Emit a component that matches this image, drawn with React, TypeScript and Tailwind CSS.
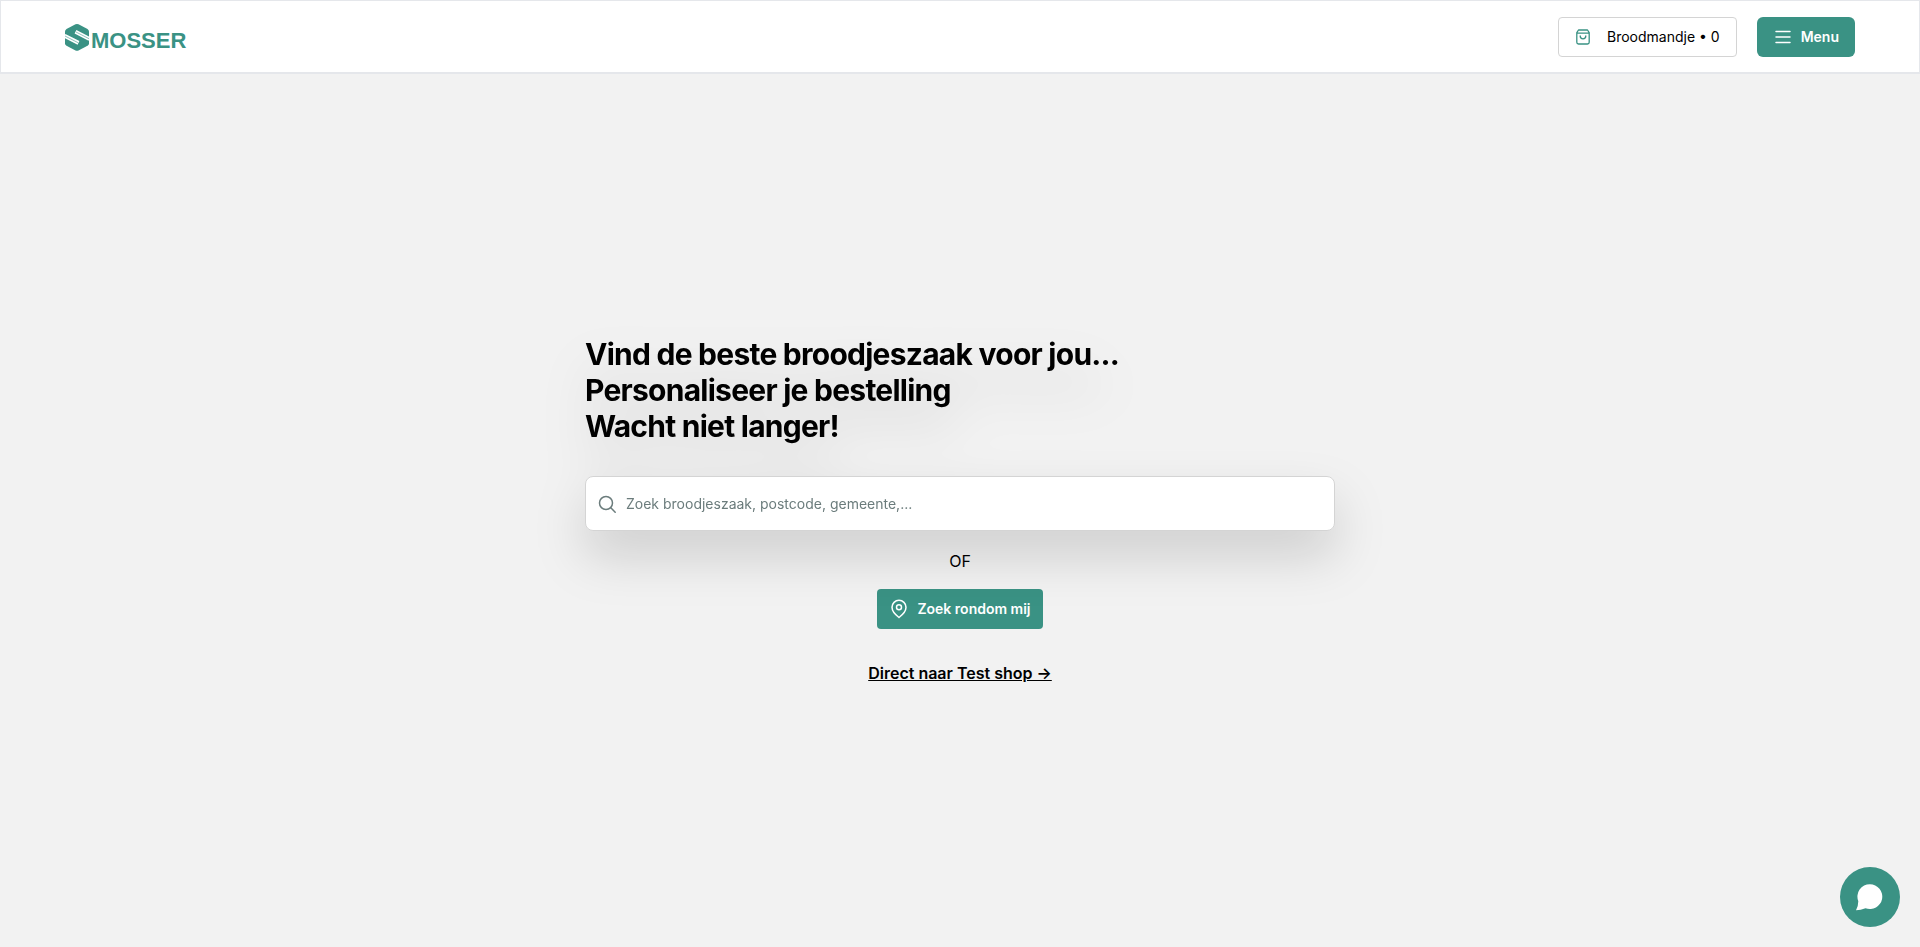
function Logo() {
  return (
    <svg viewBox="0 0 124 30" className="h-[30px] w-[124px]" role="img" aria-label="Smosser">
      <path
        d="M10.500 1.300Q12 .600 13.500 1.300L22.500 6Q24 7 24 8.500V20.500Q24 22 22.500 22.800L13.500 27.500Q12 28.200 10.500 27.500L1.500 22.800Q0 22 0 20.500V8.500Q0 7 1.500 6Z"
        fill="#3a9284"
      />
      <path d="M10.500 8.800 24.500 16M-.5 12.700 13.500 19.900" stroke="#ffffff" strokeWidth="4" fill="none" />
      <path d="M11 9 24 15.700M0 13 13 19.700" stroke="#3a9284" strokeWidth=".8" strokeOpacity=".7" fill="none" />
      <text x="26" y="25" fontFamily="Liberation Sans, Arial, sans-serif" fontWeight="700" fontSize="22" fill="#3a9284">
        MOSSER
      </text>
    </svg>
  );
}

function BagIcon() {
  return (
    <svg viewBox="0 0 16 16" className="size-4" fill="none" stroke="#3a9284" strokeWidth="1.3" strokeLinecap="round" strokeLinejoin="round" aria-hidden="true">
      <path d="M3.500 1h9l1.700 2.600v9.700a1.700 1.700 0 0 1-1.700 1.700h-9a1.700 1.700 0 0 1-1.700-1.700V3.600ZM1.800 4.200h12.400M10.800 7a2.800 2.800 0 0 1-5.600 0" />
    </svg>
  );
}

export default function App() {
  return (
    <div className="flex min-h-screen flex-col bg-[#f2f2f2] font-['Inter',sans-serif] text-black">
      <header className="flex h-[74px] items-center justify-between border border-b-2 border-[#e5e7eb] bg-white px-16">
        <a href="#home" className="pt-[3px]">
          <Logo />
        </a>
        <div className="flex items-center gap-5">
          <button type="button" className="flex h-10 items-center gap-4 rounded border border-[#d4d4d4] bg-white px-4 text-sm">
            <BagIcon />
            <span>Broodmandje • 0</span>
          </button>
          <button type="button" className="flex h-10 items-center gap-2 rounded-md bg-[#3a9284] px-4 text-sm font-semibold text-white">
            <svg viewBox="0 0 20 20" className="size-5" stroke="currentColor" strokeWidth="1.500" strokeLinecap="round" aria-hidden="true">
              <path d="M3 4.500h14M3 10h14M3 15.500h14" />
            </svg>
            <span>Menu</span>
          </button>
        </div>
      </header>

      <main className="flex flex-1 flex-col items-center justify-center">
        <div className="flex w-full max-w-[750px] flex-col items-center">
          <div className="w-full drop-shadow-2xl">
            <h1 className="text-3xl font-bold tracking-tight">
              Vind de beste broodjeszaak voor jou...
              <br />
              Personaliseer je bestelling
              <br />
              Wacht niet langer!
            </h1>
            <label className="mt-8 flex h-[55px] items-center gap-2 rounded-lg border border-[#d4d4d4] bg-white px-3">
              <svg viewBox="0 0 20 20" className="size-5" fill="none" stroke="#6b7c7c" strokeWidth="1.500" strokeLinecap="round" aria-hidden="true">
                <circle cx="8" cy="9" r="6.500" />
                <path d="m12.800 13.800 4.400 4.400" />
              </svg>
              <input
                type="text"
                aria-label="Zoek broodjeszaak"
                placeholder="Zoek broodjeszaak, postcode, gemeente,..."
                className="min-w-0 flex-1 bg-transparent text-sm outline-none placeholder:text-[#6b7c7c]"
              />
            </label>
          </div>
          <p className="mt-[18px] text-base">OF</p>
          <button type="button" className="mt-4 flex h-10 items-center gap-2 rounded bg-[#3a9284] px-3 text-sm font-semibold text-white">
            <svg viewBox="0 0 20 20" className="size-5" fill="none" stroke="currentColor" strokeWidth="1.500" aria-hidden="true">
              <path d="M17 8.300C17 13 12 17 10 18.500 8 17 3 13 3 8.300a7 7 0 0 1 14 0Z" />
              <circle cx="10" cy="8.300" r="2.500" />
            </svg>
            <span>Zoek rondom mij</span>
          </button>
          <a href="#test-shop" className="mt-8 text-base font-semibold underline">
            Direct naar Test shop →
          </a>
        </div>
      </main>

      <button type="button" aria-label="Chat" className="fixed right-5 bottom-5 flex size-[60px] items-center justify-center rounded-full bg-[#3a9284] text-white">
        <svg viewBox="0 0 28 28" className="size-7" fill="currentColor" aria-hidden="true">
          <path d="M14 1.200a12.400 12.400 0 1 1-4.500 24Q4.500 27.200 0 27.200 2.300 23 2.300 18.200A12.400 12.400 0 0 1 14 1.200Z" />
        </svg>
      </button>
    </div>
  );
}
